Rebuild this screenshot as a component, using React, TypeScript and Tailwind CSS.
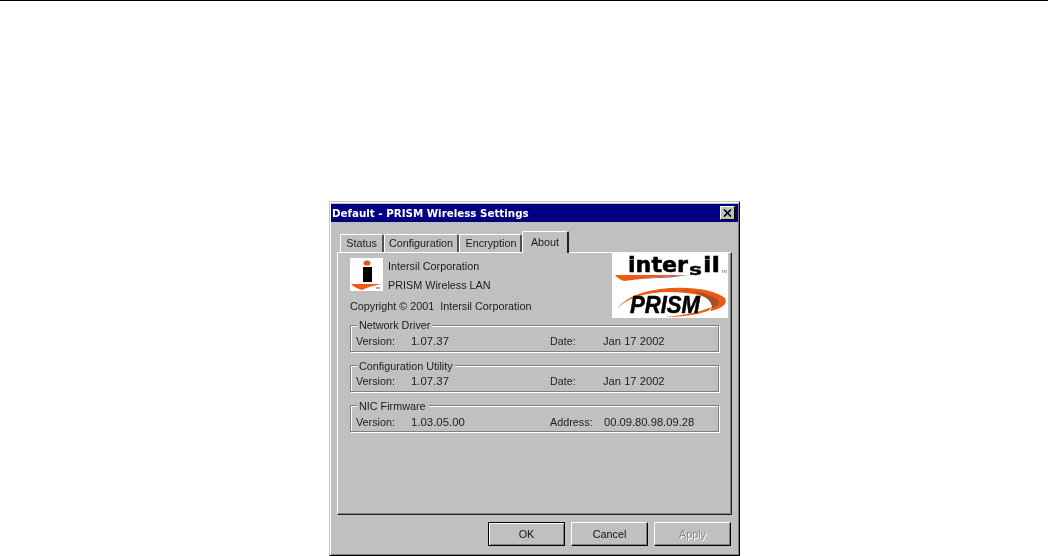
const ui = { fontFamily: '"Liberation Sans", Arial, sans-serif' };

function Tab({ label, w, active, extra = "" }: { label: string; w: string; active?: boolean; extra?: string }) {
  return (
    <div
      className={
        active
          ? `${w} relative z-10 h-[22px] -mb-[1px] pb-[1px] flex items-center justify-center bg-[#c0c0c0] border-t border-l border-white rounded-t-[2px] border-r-2 border-r-[#202020] text-[#1c1c1c]`
          : `${w} ${extra} mt-[3px] h-[18px] flex items-center justify-center bg-[#c0c0c0] border-t border-l border-white rounded-t-[2px] border-r-2 border-r-[#505050] text-[#1c1c1c]`
      }
    >
      {label}
    </div>
  );
}

function Group({ title, titleW, titleTop, rowPad, mt, left, right, leftLabel, rightLabel, rv }: { title: string; titleW: string; titleTop: string; rowPad: string; mt: string; left: string; right: string; leftLabel: string; rightLabel: string; rv: string }) {
  return (
    <div className={`relative ${mt} ml-[12px] w-[369px] h-[27px] border border-[#808080] shadow-[inset_1px_1px_0_#fff,1px_1px_0_#fff]`}>
      <div className={`absolute left-[6px] ${titleTop} ${titleW} h-[13px] leading-[13px] bg-[#c0c0c0] pl-[2px] text-[#1c1c1c]`}>{title}</div>
      <div className={`flex items-baseline ${rowPad} pl-[5px] text-[#1c1c1c]`}>
        <div className="w-[55px]">{leftLabel}</div>
        <div className="w-[139px] text-[11.4px]">{left}</div>
        <div className={rv}>{rightLabel}</div>
        <div className="text-[11.2px]">{right}</div>
      </div>
    </div>
  );
}

function Btn({ label, def, dis }: { label: string; def?: boolean; dis?: boolean }) {
  return (
    <div
      className={
        def
          ? "w-[77px] h-[24px] flex items-center justify-center bg-[#c0c0c0] border border-black shadow-[inset_1px_1px_0_#fff,inset_-1px_-1px_0_#808080] text-[#111]"
          : "w-[77px] h-[24px] flex items-center justify-center bg-[#c0c0c0] border-t border-l border-white border-r border-b border-r-black border-b-black shadow-[inset_-1px_-1px_0_#808080] text-[#111]"
      }
    >
      {dis ? <span className="text-[#8a8a8a] [text-shadow:1px_1px_0_#fff]">{label}</span> : label}
    </div>
  );
}

function SmallLogo() {
  return (
    <svg width="33" height="33" viewBox="0 0 33 33" className="bg-white block shrink-0">
      <ellipse cx="17" cy="5" rx="3.5" ry="2.6" fill="#e8501c" />
      <rect x="13" y="9" width="9" height="15" fill="#000" />
      <path d="M1 26 L31 26 Q20 28 12 32 Q5 30 1 26Z" fill="#f05a14" />
      <rect x="26" y="29" width="4" height="2" fill="#aaa" />
    </svg>
  );
}

function BigLogo() {
  const heavy = '"DejaVu Sans", sans-serif';
  return (
    <svg width="116" height="65" viewBox="0 0 116 65" className="bg-white block shrink-0">
      <text x="16" y="19" fontFamily={heavy} fontWeight="700" fontSize="21" textLength="60" lengthAdjust="spacingAndGlyphs" stroke="#000" strokeWidth="0.5">inter</text>
      <text x="77" y="22" fontFamily={heavy} fontWeight="700" fontSize="16" textLength="13" lengthAdjust="spacingAndGlyphs" stroke="#000" strokeWidth="0.4">s</text>
      <text x="91" y="19" fontFamily={heavy} fontWeight="700" fontSize="21" textLength="17" lengthAdjust="spacingAndGlyphs" stroke="#000" strokeWidth="0.4">il</text>
      <text x="109" y="20" fontFamily='"Liberation Sans", sans-serif' fontSize="4" fill="#555">TM</text>
      <path d="M3 22 L76 22 Q40 24 12 28 Q6 26 3 22Z" fill="#ee5a12" />
      <path d="M24 26 L76 22 L58 24.5Z" fill="#7a4a90" />
      <path d="M5 56 Q18 38 58 35 Q96 33 113 45 Q117 54 98 58 Q106 46 82 41 Q48 36 24 44 Q12 48 5 56Z" fill="#ee5a12" />
      <path d="M66 37 Q92 37 106 47 Q109 52 100 55 Q100 45 82 39Z" fill="#a0502c" />
      <path d="M52 64 Q80 62 100 54 L96 58 Q78 64 52 64Z" fill="#ee5a12" />
      <text x="18" y="60" fontFamily='"Liberation Sans", sans-serif' fontWeight="700" fontStyle="italic" fontSize="23" textLength="70" lengthAdjust="spacingAndGlyphs" stroke="#000" strokeWidth="0.5">PRISM</text>
    </svg>
  );
}

export default function App() {
  return (
    <div style={ui} className="w-[1048px] h-[556px] overflow-hidden bg-white border-t border-black text-[10.8px] leading-none">
      <div className="ml-[329px] mt-[200px] w-[411px] h-[355px] blur-[0.3px] bg-[#c0c0c0] border-t border-l border-t-[#c8c8c8] border-l-[#c8c8c8] border-r border-b border-r-black border-b-black shadow-[inset_1px_1px_0_#fff,inset_-1px_-1px_0_#808080] pt-[2px]">
        <div className="h-[18px] ml-[1px] mr-[1px] flex items-center justify-between bg-[#000080] pl-[1px] pr-[3px]">
          <span className="text-white font-bold text-[10.3px]" style={{ fontFamily: '"DejaVu Sans", Verdana, sans-serif' }}>Default - PRISM Wireless Settings</span>
          <div className="w-[15px] h-[14px] bg-[#c0c0c0] border-t border-l border-white border-r border-b border-r-black border-b-black flex items-center justify-center">
            <svg width="9" height="8" viewBox="0 0 9 8"><path d="M1 0.5 L8 7.5 M8 0.5 L1 7.5" stroke="#000" strokeWidth="1.6" /></svg>
          </div>
        </div>
        <div className="ml-[7px] mt-[9px] w-[395px]">
          <div className="flex pl-[3px] relative">
            <Tab label="Status" w="w-[44px]" />
            <Tab label="Configuration" w="w-[75px]" />
            <Tab label="Encryption" w="w-[63px]" extra="pl-[2px]" />
            <Tab label="About" w="w-[47px]" active />
          </div>
          <div className="h-[263px] w-[395px] border-t border-l border-white border-r border-b border-r-[#202020] border-b-[#202020] shadow-[inset_-1px_-1px_0_#808080]">
            <div className="flex justify-between items-start pr-[3px]">
              <div className="pl-[12px] pt-[5px]">
                <div className="flex">
                  <SmallLogo />
                  <div className="ml-[5px] pt-[1px] text-[#1c1c1c]">
                    <div className="h-[14px] leading-[14px]">Intersil Corporation</div>
                    <div className="mt-[5px] h-[14px] leading-[14px]">PRISM Wireless LAN</div>
                  </div>
                </div>
                <div className="mt-[7px] h-[14px] leading-[14px] text-[#1c1c1c]">Copyright © 2001&nbsp; Intersil Corporation</div>
              </div>
              <BigLogo />
            </div>
            <Group title="Network Driver" titleW="w-[75px]" titleTop="top-[-7px]" rowPad="pt-[10px]" mt="mt-[7px]" leftLabel="Version:" left="1.07.37" rightLabel="Date:" right="Jan 17 2002" rv="w-[53px]" />
            <Group title="Configuration Utility" titleW="w-[98px]" titleTop="top-[-6px]" rowPad="pt-[10px]" mt="mt-[13px]" leftLabel="Version:" left="1.07.37" rightLabel="Date:" right="Jan 17 2002" rv="w-[53px]" />
            <Group title="NIC Firmware" titleW="w-[72px]" titleTop="top-[-6px]" rowPad="pt-[11px]" mt="mt-[13px]" leftLabel="Version:" left="1.03.05.00" rightLabel="Address:" right="00.09.80.98.09.28" rv="w-[54px]" />
          </div>
          <div className="flex justify-end gap-[6px] mt-[7px] pr-[1px]">
            <Btn label="OK" def />
            <Btn label="Cancel" />
            <Btn label="Apply" dis />
          </div>
        </div>
      </div>
    </div>
  );
}
